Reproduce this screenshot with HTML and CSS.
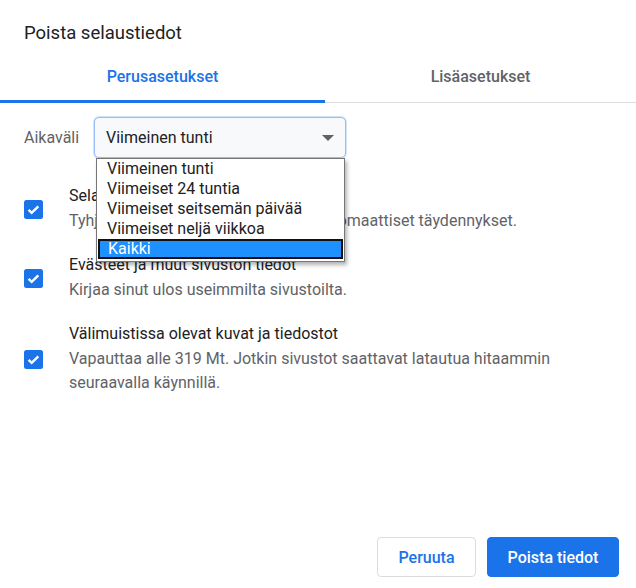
FILE: index.html
```html
<!DOCTYPE html>
<html lang="fi">
<head>
<meta charset="utf-8">
<title>Poista selaustiedot</title>
<link rel="stylesheet" href="styles.css">
</head>
<body>
<div class="dialog">
  <div class="title">Poista selaustiedot</div>
  <div class="tabs">
    <div class="tab active">Perusasetukset</div>
    <div class="tab">Lisäasetukset</div>
  </div>
  <div class="range-row">
    <span class="range-label">Aikaväli</span>
    <div class="select-wrap">
      <div class="select">
        <span>Viimeinen tunti</span>
        <span class="arrow"></span>
      </div>
      <ul class="dropdown">
        <li>Viimeinen tunti</li>
        <li>Viimeiset 24 tuntia</li>
        <li>Viimeiset seitsemän päivää</li>
        <li>Viimeiset neljä viikkoa</li>
        <li class="selected">Kaikki</li>
      </ul>
    </div>
  </div>
  <div class="options">
    <div class="option">
      <svg class="check" width="19" height="19" viewBox="0 0 19 19"><rect width="19" height="19" rx="2.5" fill="#1a73e8"/><path d="M4.6 9.8l3.1 3.1 6.6-6.6" fill="none" stroke="#fff" stroke-width="2.4"/></svg>
      <div class="option-text">
        <div class="option-title">Selaushistoria</div>
        <div class="option-sub">Tyhjentää historian ja osoitepalkin automaattiset täydennykset.</div>
      </div>
    </div>
    <div class="option">
      <svg class="check" width="19" height="19" viewBox="0 0 19 19"><rect width="19" height="19" rx="2.5" fill="#1a73e8"/><path d="M4.6 9.8l3.1 3.1 6.6-6.6" fill="none" stroke="#fff" stroke-width="2.4"/></svg>
      <div class="option-text">
        <div class="option-title">Evästeet ja muut sivuston tiedot</div>
        <div class="option-sub">Kirjaa sinut ulos useimmilta sivustoilta.</div>
      </div>
    </div>
    <div class="option">
      <svg class="check" width="19" height="19" viewBox="0 0 19 19"><rect width="19" height="19" rx="2.5" fill="#1a73e8"/><path d="M4.6 9.8l3.1 3.1 6.6-6.6" fill="none" stroke="#fff" stroke-width="2.4"/></svg>
      <div class="option-text">
        <div class="option-title">Välimuistissa olevat kuvat ja tiedostot</div>
        <div class="option-sub">Vapauttaa alle 319 Mt. Jotkin sivustot saattavat latautua hitaammin seuraavalla käynnillä.</div>
      </div>
    </div>
  </div>
  <div class="footer">
    <button class="btn btn-cancel">Peruuta</button>
    <button class="btn btn-primary">Poista tiedot</button>
  </div>
</div>
</body>
</html>
```
FILE: styles.css
```css
* { box-sizing: border-box; }
html, body {
  margin: 0;
  padding: 0;
  background: #fff;
}
body {
  font-family: Roboto, "Liberation Sans", sans-serif;
  color: #202124;
}
.dialog {
  width: 636px;
  height: 588px;
  display: flex;
  flex-direction: column;
  background: #fff;
}
.title {
  padding: 21px 24px 0;
  font-size: 18.5px;
  line-height: 24px;
  height: 48px;
  color: #202124;
}
.tabs {
  display: flex;
  border-bottom: 1px solid #dadce0;
}
.tab {
  flex: 1;
  text-align: center;
  padding: 19px 0 15px;
  font-size: 16px;
  line-height: 20px;
  font-weight: 500;
  color: #5f6368;
  position: relative;
}
.tab.active {
  flex: 0 0 325px;
  color: #1a73e8;
}
.tab.active::after {
  content: "";
  position: absolute;
  left: 0;
  right: 0;
  bottom: -1px;
  height: 3px;
  background: #1a73e8;
}
.range-row {
  display: flex;
  align-items: center;
  padding: 14px 24px 0;
}
.range-label {
  font-size: 16px;
  color: #5f6368;
  width: 70px;
}
.select-wrap {
  position: relative;
}
.select {
  width: 252px;
  height: 41px;
  border: 1px solid #9abff8;
  box-shadow: 0 0 0 1px #d2e3fc;
  border-radius: 5px;
  background: #f8f9fa;
  display: flex;
  align-items: center;
  justify-content: space-between;
  padding: 0 11px 0 11px;
  font-size: 16px;
  color: #202124;
}
.arrow {
  width: 0;
  height: 0;
  border-left: 6px solid transparent;
  border-right: 6px solid transparent;
  border-top: 6px solid #5f6368;
}
.dropdown {
  position: absolute;
  top: 41px;
  left: 2px;
  width: 249px;
  margin: 0;
  padding: 0 0 2px;
  list-style: none;
  background: #fff;
  border: 1px solid #767676;
  box-shadow: 2px 3px 4px rgba(0, 0, 0, 0.3);
  font-size: 16px;
  z-index: 5;
}
.dropdown li {
  height: 20px;
  line-height: 20px;
  padding-left: 10px;
  color: #202124;
}
.dropdown li.selected {
  margin: 0 1px;
  padding-left: 8px;
  line-height: 16px;
  background: #1e90ff;
  color: #fff;
  border: 2px solid #111;
}
.options {
  display: flex;
  flex-direction: column;
  gap: 21px;
  padding: 27px 24px 0;
}
.option {
  display: flex;
  align-items: center;
}
.check {
  flex: 0 0 19px;
  margin-right: 26px;
}
.option-title {
  font-size: 16px;
  line-height: 22px;
  color: #202124;
}
.option-sub {
  margin-top: 2px;
  font-size: 16px;
  line-height: 24px;
  color: #5f6368;
}
.footer {
  margin-top: auto;
  display: flex;
  justify-content: flex-end;
  gap: 11px;
  padding: 0 17px 11px 0;
}
.btn {
  height: 40px;
  border-radius: 4px;
  font-family: Roboto, "Liberation Sans", sans-serif;
  font-size: 16px;
  font-weight: 500;
  cursor: pointer;
}
.btn-cancel {
  width: 99px;
  padding: 0;
  background: #fff;
  border: 1px solid #dadce0;
  color: #1a73e8;
}
.btn-primary {
  width: 132px;
  padding: 0;
  background: #1a73e8;
  border: 1px solid #1a73e8;
  color: #fff;
}
```
